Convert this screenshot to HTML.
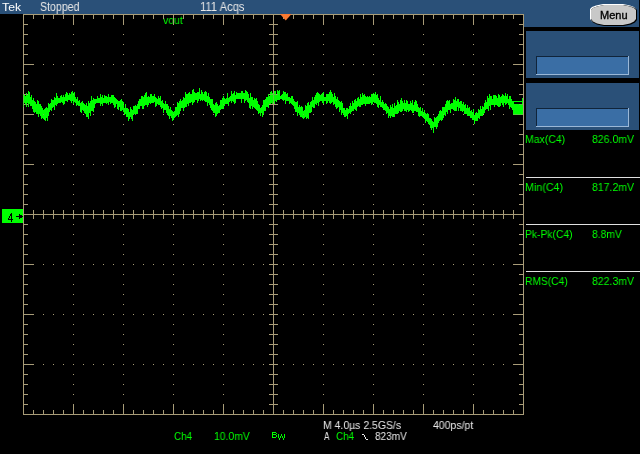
<!DOCTYPE html>
<html><head><meta charset="utf-8"><style>
html,body{margin:0;padding:0;background:#000;}
body{width:640px;height:454px;overflow:hidden;position:relative;font-family:"Liberation Sans",sans-serif;}
svg{position:absolute;left:0;top:0;}
.t{position:absolute;white-space:nowrap;transform-origin:0 0;will-change:transform;}
</style></head><body>
<svg width="640" height="454" viewBox="0 0 640 454" shape-rendering="crispEdges">
<rect x="0" y="0" width="640" height="454" fill="#000"/>
<rect x="0" y="0" width="639" height="14" fill="#2a5078"/>
<rect x="524" y="0" width="115" height="27" fill="#2a5078"/>
<rect x="526" y="31" width="113" height="47" fill="#2a5078"/>
<rect x="526" y="83" width="113" height="47" fill="#2a5078"/>
<rect x="536" y="56" width="93" height="19" fill="#3a6ea5"/>
<rect x="536" y="56" width="93" height="1" fill="#10243a"/>
<rect x="536" y="56" width="1" height="19" fill="#10243a"/>
<rect x="536" y="74" width="93" height="1" fill="#9ab8d8"/>
<rect x="628" y="56" width="1" height="19" fill="#9ab8d8"/>
<rect x="536" y="108" width="93" height="19" fill="#3a6ea5"/>
<rect x="536" y="108" width="93" height="1" fill="#10243a"/>
<rect x="536" y="108" width="1" height="19" fill="#10243a"/>
<rect x="536" y="126" width="93" height="1" fill="#9ab8d8"/>
<rect x="628" y="108" width="1" height="19" fill="#9ab8d8"/>
<rect x="526" y="177" width="114" height="1" fill="#e0e0e0"/>
<rect x="526" y="224" width="114" height="1" fill="#e0e0e0"/>
<rect x="526" y="271" width="114" height="1" fill="#e0e0e0"/>
<g id="tr" fill="#00ff00">
<rect x="24" y="95" width="1" height="8"/>
<rect x="25" y="96" width="1" height="9"/>
<rect x="26" y="93" width="1" height="14"/>
<rect x="27" y="95" width="1" height="8"/>
<rect x="28" y="91" width="1" height="16"/>
<rect x="29" y="92" width="1" height="12"/>
<rect x="30" y="97" width="1" height="9"/>
<rect x="31" y="95" width="1" height="11"/>
<rect x="32" y="100" width="1" height="9"/>
<rect x="33" y="98" width="1" height="14"/>
<rect x="34" y="101" width="1" height="12"/>
<rect x="35" y="102" width="1" height="10"/>
<rect x="36" y="104" width="1" height="10"/>
<rect x="37" y="100" width="1" height="14"/>
<rect x="38" y="101" width="1" height="16"/>
<rect x="39" y="104" width="1" height="10"/>
<rect x="40" y="104" width="1" height="12"/>
<rect x="41" y="106" width="1" height="13"/>
<rect x="42" y="108" width="1" height="10"/>
<rect x="43" y="110" width="1" height="9"/>
<rect x="44" y="109" width="1" height="11"/>
<rect x="45" y="108" width="1" height="13"/>
<rect x="46" y="107" width="1" height="11"/>
<rect x="47" y="108" width="1" height="13"/>
<rect x="48" y="103" width="1" height="13"/>
<rect x="49" y="104" width="1" height="8"/>
<rect x="50" y="103" width="1" height="7"/>
<rect x="51" y="99" width="1" height="12"/>
<rect x="52" y="100" width="1" height="8"/>
<rect x="53" y="100" width="1" height="7"/>
<rect x="54" y="97" width="1" height="13"/>
<rect x="55" y="98" width="1" height="7"/>
<rect x="56" y="93" width="1" height="13"/>
<rect x="57" y="96" width="1" height="8"/>
<rect x="58" y="98" width="1" height="5"/>
<rect x="59" y="98" width="1" height="5"/>
<rect x="60" y="96" width="1" height="7"/>
<rect x="61" y="95" width="1" height="7"/>
<rect x="62" y="97" width="1" height="6"/>
<rect x="63" y="95" width="1" height="10"/>
<rect x="64" y="97" width="1" height="7"/>
<rect x="65" y="94" width="1" height="7"/>
<rect x="66" y="92" width="1" height="9"/>
<rect x="67" y="93" width="1" height="9"/>
<rect x="68" y="95" width="1" height="5"/>
<rect x="69" y="93" width="1" height="7"/>
<rect x="70" y="94" width="1" height="7"/>
<rect x="71" y="92" width="1" height="11"/>
<rect x="72" y="91" width="1" height="10"/>
<rect x="73" y="93" width="1" height="11"/>
<rect x="74" y="92" width="1" height="10"/>
<rect x="75" y="97" width="1" height="6"/>
<rect x="76" y="99" width="1" height="7"/>
<rect x="77" y="97" width="1" height="8"/>
<rect x="78" y="101" width="1" height="5"/>
<rect x="79" y="100" width="1" height="6"/>
<rect x="80" y="103" width="1" height="9"/>
<rect x="81" y="102" width="1" height="11"/>
<rect x="82" y="101" width="1" height="9"/>
<rect x="83" y="103" width="1" height="8"/>
<rect x="84" y="104" width="1" height="9"/>
<rect x="85" y="105" width="1" height="9"/>
<rect x="86" y="103" width="1" height="14"/>
<rect x="87" y="106" width="1" height="11"/>
<rect x="88" y="101" width="1" height="18"/>
<rect x="89" y="103" width="1" height="10"/>
<rect x="90" y="101" width="1" height="15"/>
<rect x="91" y="96" width="1" height="15"/>
<rect x="92" y="100" width="1" height="11"/>
<rect x="93" y="98" width="1" height="14"/>
<rect x="94" y="99" width="1" height="9"/>
<rect x="95" y="99" width="1" height="5"/>
<rect x="96" y="99" width="1" height="4"/>
<rect x="97" y="96" width="1" height="7"/>
<rect x="98" y="98" width="1" height="5"/>
<rect x="99" y="98" width="1" height="5"/>
<rect x="100" y="94" width="1" height="12"/>
<rect x="101" y="97" width="1" height="7"/>
<rect x="102" y="95" width="1" height="11"/>
<rect x="103" y="98" width="1" height="5"/>
<rect x="104" y="95" width="1" height="8"/>
<rect x="105" y="96" width="1" height="7"/>
<rect x="106" y="96" width="1" height="8"/>
<rect x="107" y="97" width="1" height="6"/>
<rect x="108" y="94" width="1" height="11"/>
<rect x="109" y="97" width="1" height="5"/>
<rect x="110" y="97" width="1" height="7"/>
<rect x="111" y="95" width="1" height="8"/>
<rect x="112" y="95" width="1" height="8"/>
<rect x="113" y="95" width="1" height="10"/>
<rect x="114" y="97" width="1" height="11"/>
<rect x="115" y="98" width="1" height="9"/>
<rect x="116" y="99" width="1" height="5"/>
<rect x="117" y="100" width="1" height="9"/>
<rect x="118" y="101" width="1" height="9"/>
<rect x="119" y="101" width="1" height="6"/>
<rect x="120" y="100" width="1" height="11"/>
<rect x="121" y="99" width="1" height="12"/>
<rect x="122" y="101" width="1" height="9"/>
<rect x="123" y="102" width="1" height="10"/>
<rect x="124" y="108" width="1" height="7"/>
<rect x="125" y="104" width="1" height="10"/>
<rect x="126" y="108" width="1" height="9"/>
<rect x="127" y="108" width="1" height="9"/>
<rect x="128" y="109" width="1" height="12"/>
<rect x="129" y="112" width="1" height="7"/>
<rect x="130" y="107" width="1" height="10"/>
<rect x="131" y="109" width="1" height="10"/>
<rect x="132" y="110" width="1" height="11"/>
<rect x="133" y="106" width="1" height="9"/>
<rect x="134" y="106" width="1" height="8"/>
<rect x="135" y="105" width="1" height="10"/>
<rect x="136" y="106" width="1" height="8"/>
<rect x="137" y="104" width="1" height="10"/>
<rect x="138" y="101" width="1" height="8"/>
<rect x="139" y="99" width="1" height="10"/>
<rect x="140" y="99" width="1" height="7"/>
<rect x="141" y="96" width="1" height="10"/>
<rect x="142" y="96" width="1" height="13"/>
<rect x="143" y="97" width="1" height="12"/>
<rect x="144" y="95" width="1" height="11"/>
<rect x="145" y="93" width="1" height="12"/>
<rect x="146" y="92" width="1" height="13"/>
<rect x="147" y="97" width="1" height="10"/>
<rect x="148" y="96" width="1" height="9"/>
<rect x="149" y="97" width="1" height="6"/>
<rect x="150" y="94" width="1" height="10"/>
<rect x="151" y="94" width="1" height="9"/>
<rect x="152" y="96" width="1" height="7"/>
<rect x="153" y="96" width="1" height="7"/>
<rect x="154" y="94" width="1" height="8"/>
<rect x="155" y="97" width="1" height="10"/>
<rect x="156" y="98" width="1" height="8"/>
<rect x="157" y="99" width="1" height="5"/>
<rect x="158" y="96" width="1" height="9"/>
<rect x="159" y="98" width="1" height="7"/>
<rect x="160" y="96" width="1" height="11"/>
<rect x="161" y="101" width="1" height="8"/>
<rect x="162" y="100" width="1" height="8"/>
<rect x="163" y="103" width="1" height="10"/>
<rect x="164" y="104" width="1" height="6"/>
<rect x="165" y="101" width="1" height="9"/>
<rect x="166" y="104" width="1" height="9"/>
<rect x="167" y="104" width="1" height="11"/>
<rect x="168" y="106" width="1" height="10"/>
<rect x="169" y="109" width="1" height="10"/>
<rect x="170" y="107" width="1" height="9"/>
<rect x="171" y="110" width="1" height="8"/>
<rect x="172" y="111" width="1" height="10"/>
<rect x="173" y="112" width="1" height="8"/>
<rect x="174" y="111" width="1" height="7"/>
<rect x="175" y="107" width="1" height="10"/>
<rect x="176" y="107" width="1" height="9"/>
<rect x="177" y="102" width="1" height="13"/>
<rect x="178" y="103" width="1" height="14"/>
<rect x="179" y="101" width="1" height="13"/>
<rect x="180" y="99" width="1" height="12"/>
<rect x="181" y="101" width="1" height="7"/>
<rect x="182" y="100" width="1" height="8"/>
<rect x="183" y="97" width="1" height="14"/>
<rect x="184" y="98" width="1" height="10"/>
<rect x="185" y="92" width="1" height="15"/>
<rect x="186" y="94" width="1" height="13"/>
<rect x="187" y="94" width="1" height="10"/>
<rect x="188" y="93" width="1" height="13"/>
<rect x="189" y="92" width="1" height="11"/>
<rect x="190" y="94" width="1" height="9"/>
<rect x="191" y="94" width="1" height="8"/>
<rect x="192" y="90" width="1" height="15"/>
<rect x="193" y="89" width="1" height="14"/>
<rect x="194" y="92" width="1" height="10"/>
<rect x="195" y="93" width="1" height="7"/>
<rect x="196" y="93" width="1" height="7"/>
<rect x="197" y="92" width="1" height="11"/>
<rect x="198" y="92" width="1" height="9"/>
<rect x="199" y="88" width="1" height="11"/>
<rect x="200" y="94" width="1" height="7"/>
<rect x="201" y="90" width="1" height="10"/>
<rect x="202" y="92" width="1" height="9"/>
<rect x="203" y="94" width="1" height="6"/>
<rect x="204" y="92" width="1" height="9"/>
<rect x="205" y="91" width="1" height="11"/>
<rect x="206" y="92" width="1" height="10"/>
<rect x="207" y="96" width="1" height="10"/>
<rect x="208" y="93" width="1" height="10"/>
<rect x="209" y="97" width="1" height="8"/>
<rect x="210" y="99" width="1" height="9"/>
<rect x="211" y="99" width="1" height="11"/>
<rect x="212" y="99" width="1" height="12"/>
<rect x="213" y="104" width="1" height="9"/>
<rect x="214" y="105" width="1" height="8"/>
<rect x="215" y="103" width="1" height="14"/>
<rect x="216" y="102" width="1" height="14"/>
<rect x="217" y="104" width="1" height="10"/>
<rect x="218" y="106" width="1" height="7"/>
<rect x="219" y="105" width="1" height="8"/>
<rect x="220" y="100" width="1" height="10"/>
<rect x="221" y="100" width="1" height="9"/>
<rect x="222" y="98" width="1" height="11"/>
<rect x="223" y="96" width="1" height="13"/>
<rect x="224" y="98" width="1" height="8"/>
<rect x="225" y="99" width="1" height="5"/>
<rect x="226" y="98" width="1" height="6"/>
<rect x="227" y="93" width="1" height="11"/>
<rect x="228" y="98" width="1" height="8"/>
<rect x="229" y="97" width="1" height="5"/>
<rect x="230" y="96" width="1" height="5"/>
<rect x="231" y="91" width="1" height="12"/>
<rect x="232" y="94" width="1" height="7"/>
<rect x="233" y="93" width="1" height="9"/>
<rect x="234" y="91" width="1" height="13"/>
<rect x="235" y="95" width="1" height="8"/>
<rect x="236" y="92" width="1" height="7"/>
<rect x="237" y="93" width="1" height="6"/>
<rect x="238" y="93" width="1" height="6"/>
<rect x="239" y="93" width="1" height="6"/>
<rect x="240" y="93" width="1" height="6"/>
<rect x="241" y="91" width="1" height="12"/>
<rect x="242" y="91" width="1" height="8"/>
<rect x="243" y="93" width="1" height="6"/>
<rect x="244" y="93" width="1" height="10"/>
<rect x="245" y="90" width="1" height="11"/>
<rect x="246" y="91" width="1" height="9"/>
<rect x="247" y="92" width="1" height="10"/>
<rect x="248" y="94" width="1" height="9"/>
<rect x="249" y="98" width="1" height="10"/>
<rect x="250" y="93" width="1" height="16"/>
<rect x="251" y="97" width="1" height="9"/>
<rect x="252" y="97" width="1" height="12"/>
<rect x="253" y="100" width="1" height="7"/>
<rect x="254" y="98" width="1" height="10"/>
<rect x="255" y="99" width="1" height="10"/>
<rect x="256" y="98" width="1" height="12"/>
<rect x="257" y="101" width="1" height="10"/>
<rect x="258" y="104" width="1" height="10"/>
<rect x="259" y="105" width="1" height="8"/>
<rect x="260" y="108" width="1" height="8"/>
<rect x="261" y="107" width="1" height="6"/>
<rect x="262" y="105" width="1" height="12"/>
<rect x="263" y="100" width="1" height="15"/>
<rect x="264" y="100" width="1" height="11"/>
<rect x="265" y="99" width="1" height="12"/>
<rect x="266" y="97" width="1" height="10"/>
<rect x="267" y="97" width="1" height="10"/>
<rect x="268" y="94" width="1" height="14"/>
<rect x="269" y="96" width="1" height="8"/>
<rect x="270" y="92" width="1" height="12"/>
<rect x="271" y="91" width="1" height="12"/>
<rect x="272" y="93" width="1" height="11"/>
<rect x="273" y="94" width="1" height="8"/>
<rect x="274" y="91" width="1" height="13"/>
<rect x="275" y="91" width="1" height="10"/>
<rect x="276" y="95" width="1" height="7"/>
<rect x="277" y="90" width="1" height="10"/>
<rect x="278" y="91" width="1" height="9"/>
<rect x="279" y="90" width="1" height="10"/>
<rect x="280" y="96" width="1" height="3"/>
<rect x="281" y="95" width="1" height="4"/>
<rect x="282" y="94" width="1" height="6"/>
<rect x="283" y="91" width="1" height="10"/>
<rect x="284" y="92" width="1" height="8"/>
<rect x="285" y="92" width="1" height="12"/>
<rect x="286" y="94" width="1" height="7"/>
<rect x="287" y="93" width="1" height="8"/>
<rect x="288" y="97" width="1" height="4"/>
<rect x="289" y="97" width="1" height="7"/>
<rect x="290" y="98" width="1" height="5"/>
<rect x="291" y="96" width="1" height="8"/>
<rect x="292" y="96" width="1" height="9"/>
<rect x="293" y="99" width="1" height="7"/>
<rect x="294" y="101" width="1" height="8"/>
<rect x="295" y="102" width="1" height="10"/>
<rect x="296" y="102" width="1" height="10"/>
<rect x="297" y="101" width="1" height="15"/>
<rect x="298" y="107" width="1" height="6"/>
<rect x="299" y="105" width="1" height="10"/>
<rect x="300" y="107" width="1" height="10"/>
<rect x="301" y="106" width="1" height="11"/>
<rect x="302" y="107" width="1" height="11"/>
<rect x="303" y="111" width="1" height="8"/>
<rect x="304" y="110" width="1" height="8"/>
<rect x="305" y="105" width="1" height="12"/>
<rect x="306" y="106" width="1" height="13"/>
<rect x="307" y="103" width="1" height="15"/>
<rect x="308" y="102" width="1" height="17"/>
<rect x="309" y="105" width="1" height="8"/>
<rect x="310" y="102" width="1" height="11"/>
<rect x="311" y="101" width="1" height="11"/>
<rect x="312" y="97" width="1" height="10"/>
<rect x="313" y="100" width="1" height="8"/>
<rect x="314" y="97" width="1" height="11"/>
<rect x="315" y="95" width="1" height="9"/>
<rect x="316" y="93" width="1" height="12"/>
<rect x="317" y="92" width="1" height="11"/>
<rect x="318" y="93" width="1" height="13"/>
<rect x="319" y="94" width="1" height="8"/>
<rect x="320" y="95" width="1" height="6"/>
<rect x="321" y="94" width="1" height="7"/>
<rect x="322" y="93" width="1" height="10"/>
<rect x="323" y="92" width="1" height="12"/>
<rect x="324" y="97" width="1" height="4"/>
<rect x="325" y="97" width="1" height="4"/>
<rect x="326" y="94" width="1" height="10"/>
<rect x="327" y="94" width="1" height="9"/>
<rect x="328" y="94" width="1" height="7"/>
<rect x="329" y="92" width="1" height="11"/>
<rect x="330" y="90" width="1" height="14"/>
<rect x="331" y="92" width="1" height="11"/>
<rect x="332" y="94" width="1" height="8"/>
<rect x="333" y="97" width="1" height="8"/>
<rect x="334" y="93" width="1" height="11"/>
<rect x="335" y="96" width="1" height="11"/>
<rect x="336" y="99" width="1" height="10"/>
<rect x="337" y="97" width="1" height="11"/>
<rect x="338" y="100" width="1" height="7"/>
<rect x="339" y="101" width="1" height="11"/>
<rect x="340" y="102" width="1" height="8"/>
<rect x="341" y="101" width="1" height="14"/>
<rect x="342" y="103" width="1" height="10"/>
<rect x="343" y="108" width="1" height="7"/>
<rect x="344" y="108" width="1" height="9"/>
<rect x="345" y="110" width="1" height="7"/>
<rect x="346" y="108" width="1" height="8"/>
<rect x="347" y="108" width="1" height="11"/>
<rect x="348" y="109" width="1" height="5"/>
<rect x="349" y="106" width="1" height="7"/>
<rect x="350" y="103" width="1" height="11"/>
<rect x="351" y="106" width="1" height="6"/>
<rect x="352" y="101" width="1" height="10"/>
<rect x="353" y="103" width="1" height="8"/>
<rect x="354" y="100" width="1" height="9"/>
<rect x="355" y="99" width="1" height="11"/>
<rect x="356" y="101" width="1" height="10"/>
<rect x="357" y="98" width="1" height="9"/>
<rect x="358" y="97" width="1" height="9"/>
<rect x="359" y="99" width="1" height="8"/>
<rect x="360" y="94" width="1" height="13"/>
<rect x="361" y="97" width="1" height="8"/>
<rect x="362" y="93" width="1" height="12"/>
<rect x="363" y="95" width="1" height="9"/>
<rect x="364" y="94" width="1" height="10"/>
<rect x="365" y="96" width="1" height="10"/>
<rect x="366" y="97" width="1" height="7"/>
<rect x="367" y="96" width="1" height="8"/>
<rect x="368" y="97" width="1" height="7"/>
<rect x="369" y="96" width="1" height="8"/>
<rect x="370" y="97" width="1" height="6"/>
<rect x="371" y="94" width="1" height="11"/>
<rect x="372" y="94" width="1" height="10"/>
<rect x="373" y="93" width="1" height="9"/>
<rect x="374" y="94" width="1" height="9"/>
<rect x="375" y="92" width="1" height="11"/>
<rect x="376" y="95" width="1" height="9"/>
<rect x="377" y="94" width="1" height="13"/>
<rect x="378" y="98" width="1" height="10"/>
<rect x="379" y="100" width="1" height="5"/>
<rect x="380" y="96" width="1" height="11"/>
<rect x="381" y="102" width="1" height="5"/>
<rect x="382" y="100" width="1" height="8"/>
<rect x="383" y="102" width="1" height="8"/>
<rect x="384" y="104" width="1" height="6"/>
<rect x="385" y="103" width="1" height="8"/>
<rect x="386" y="104" width="1" height="10"/>
<rect x="387" y="106" width="1" height="7"/>
<rect x="388" y="107" width="1" height="11"/>
<rect x="389" y="109" width="1" height="7"/>
<rect x="390" y="105" width="1" height="13"/>
<rect x="391" y="107" width="1" height="9"/>
<rect x="392" y="104" width="1" height="13"/>
<rect x="393" y="108" width="1" height="9"/>
<rect x="394" y="103" width="1" height="14"/>
<rect x="395" y="106" width="1" height="8"/>
<rect x="396" y="105" width="1" height="9"/>
<rect x="397" y="100" width="1" height="14"/>
<rect x="398" y="102" width="1" height="11"/>
<rect x="399" y="104" width="1" height="7"/>
<rect x="400" y="100" width="1" height="12"/>
<rect x="401" y="98" width="1" height="14"/>
<rect x="402" y="101" width="1" height="10"/>
<rect x="403" y="103" width="1" height="6"/>
<rect x="404" y="100" width="1" height="11"/>
<rect x="405" y="103" width="1" height="8"/>
<rect x="406" y="100" width="1" height="12"/>
<rect x="407" y="101" width="1" height="9"/>
<rect x="408" y="104" width="1" height="8"/>
<rect x="409" y="104" width="1" height="7"/>
<rect x="410" y="101" width="1" height="9"/>
<rect x="411" y="103" width="1" height="8"/>
<rect x="412" y="100" width="1" height="13"/>
<rect x="413" y="105" width="1" height="8"/>
<rect x="414" y="102" width="1" height="9"/>
<rect x="415" y="100" width="1" height="11"/>
<rect x="416" y="101" width="1" height="11"/>
<rect x="417" y="104" width="1" height="8"/>
<rect x="418" y="107" width="1" height="9"/>
<rect x="419" y="108" width="1" height="9"/>
<rect x="420" y="107" width="1" height="9"/>
<rect x="421" y="111" width="1" height="5"/>
<rect x="422" y="108" width="1" height="9"/>
<rect x="423" y="112" width="1" height="6"/>
<rect x="424" y="110" width="1" height="9"/>
<rect x="425" y="113" width="1" height="10"/>
<rect x="426" y="114" width="1" height="7"/>
<rect x="427" y="113" width="1" height="9"/>
<rect x="428" y="114" width="1" height="10"/>
<rect x="429" y="118" width="1" height="7"/>
<rect x="430" y="118" width="1" height="10"/>
<rect x="431" y="119" width="1" height="11"/>
<rect x="432" y="121" width="1" height="7"/>
<rect x="433" y="122" width="1" height="11"/>
<rect x="434" y="117" width="1" height="10"/>
<rect x="435" y="118" width="1" height="9"/>
<rect x="436" y="117" width="1" height="12"/>
<rect x="437" y="116" width="1" height="11"/>
<rect x="438" y="114" width="1" height="9"/>
<rect x="439" y="111" width="1" height="10"/>
<rect x="440" y="110" width="1" height="10"/>
<rect x="441" y="111" width="1" height="10"/>
<rect x="442" y="107" width="1" height="13"/>
<rect x="443" y="107" width="1" height="11"/>
<rect x="444" y="107" width="1" height="8"/>
<rect x="445" y="104" width="1" height="12"/>
<rect x="446" y="101" width="1" height="11"/>
<rect x="447" y="100" width="1" height="14"/>
<rect x="448" y="101" width="1" height="9"/>
<rect x="449" y="100" width="1" height="10"/>
<rect x="450" y="104" width="1" height="9"/>
<rect x="451" y="103" width="1" height="6"/>
<rect x="452" y="103" width="1" height="6"/>
<rect x="453" y="99" width="1" height="11"/>
<rect x="454" y="100" width="1" height="11"/>
<rect x="455" y="97" width="1" height="14"/>
<rect x="456" y="101" width="1" height="10"/>
<rect x="457" y="99" width="1" height="8"/>
<rect x="458" y="99" width="1" height="12"/>
<rect x="459" y="102" width="1" height="6"/>
<rect x="460" y="101" width="1" height="10"/>
<rect x="461" y="101" width="1" height="10"/>
<rect x="462" y="104" width="1" height="8"/>
<rect x="463" y="102" width="1" height="9"/>
<rect x="464" y="105" width="1" height="9"/>
<rect x="465" y="104" width="1" height="10"/>
<rect x="466" y="108" width="1" height="6"/>
<rect x="467" y="105" width="1" height="11"/>
<rect x="468" y="108" width="1" height="8"/>
<rect x="469" y="107" width="1" height="9"/>
<rect x="470" y="111" width="1" height="7"/>
<rect x="471" y="110" width="1" height="8"/>
<rect x="472" y="112" width="1" height="8"/>
<rect x="473" y="109" width="1" height="11"/>
<rect x="474" y="115" width="1" height="9"/>
<rect x="475" y="113" width="1" height="8"/>
<rect x="476" y="112" width="1" height="9"/>
<rect x="477" y="113" width="1" height="8"/>
<rect x="478" y="109" width="1" height="9"/>
<rect x="479" y="110" width="1" height="9"/>
<rect x="480" y="106" width="1" height="10"/>
<rect x="481" y="109" width="1" height="7"/>
<rect x="482" y="106" width="1" height="10"/>
<rect x="483" y="107" width="1" height="7"/>
<rect x="484" y="103" width="1" height="10"/>
<rect x="485" y="100" width="1" height="10"/>
<rect x="486" y="102" width="1" height="7"/>
<rect x="487" y="96" width="1" height="13"/>
<rect x="488" y="98" width="1" height="13"/>
<rect x="489" y="94" width="1" height="12"/>
<rect x="490" y="96" width="1" height="14"/>
<rect x="491" y="96" width="1" height="9"/>
<rect x="492" y="99" width="1" height="6"/>
<rect x="493" y="95" width="1" height="10"/>
<rect x="494" y="95" width="1" height="12"/>
<rect x="495" y="95" width="1" height="10"/>
<rect x="496" y="96" width="1" height="9"/>
<rect x="497" y="98" width="1" height="8"/>
<rect x="498" y="94" width="1" height="13"/>
<rect x="499" y="95" width="1" height="12"/>
<rect x="500" y="97" width="1" height="9"/>
<rect x="501" y="96" width="1" height="7"/>
<rect x="502" y="94" width="1" height="11"/>
<rect x="503" y="95" width="1" height="12"/>
<rect x="504" y="96" width="1" height="7"/>
<rect x="505" y="93" width="1" height="12"/>
<rect x="506" y="96" width="1" height="8"/>
<rect x="507" y="94" width="1" height="9"/>
<rect x="508" y="99" width="1" height="6"/>
<rect x="509" y="96" width="1" height="13"/>
<rect x="510" y="96" width="1" height="11"/>
<rect x="511" y="99" width="1" height="9"/>
<rect x="512" y="101" width="1" height="9"/>
<rect x="513" y="101" width="1" height="14"/>
<rect x="514" y="101" width="1" height="14"/>
<rect x="515" y="101" width="1" height="14"/>
<rect x="516" y="101" width="1" height="14"/>
<rect x="517" y="101" width="1" height="14"/>
<rect x="518" y="101" width="1" height="14"/>
<rect x="519" y="101" width="1" height="14"/>
<rect x="520" y="101" width="1" height="14"/>
<rect x="521" y="101" width="1" height="14"/>
<rect x="522" y="98" width="1" height="17"/>
<rect x="23" y="94" width="1" height="13"/>
</g>
<g fill="#e8e8e8"><rect x="362" y="434" width="2" height="1"/><rect x="364" y="435" width="1" height="2"/><rect x="365" y="437" width="1" height="2"/><rect x="366" y="439" width="2" height="1"/></g>
<g fill="#00ff00"><rect x="272" y="432" width="4" height="1"/><rect x="272" y="433" width="1" height="5"/><rect x="276" y="433" width="1" height="1"/><rect x="272" y="434" width="4" height="1"/><rect x="276" y="435" width="1" height="2"/><rect x="272" y="437" width="4" height="1"/><rect x="278" y="434" width="1" height="4"/><rect x="279" y="438" width="1" height="2"/><rect x="280" y="436" width="1" height="2"/><rect x="281" y="434" width="1" height="2"/><rect x="282" y="436" width="1" height="2"/><rect x="283" y="438" width="1" height="2"/><rect x="284" y="434" width="1" height="4"/></g>
<g shape-rendering="auto">
<polygon points="590,9 592,7 596,5.5 603,4 623,4 630,5.5 634,7 636,9 636,19 634,21.5 630,23.5 623,25 603,25 596,23.5 592,21.5 590,19" fill="#ffffff"/>
<polygon points="591,10 593,8 597,6.5 604,5 624,5 631,6.5 635,8 637,10 637,20 635,22.5 631,24.5 624,26 604,26 597,24.5 593,22.5 591,20" fill="#000000"/>
<polygon points="591,10 593,8 597,6.5 604,5 623,5 630,6.5 634,8 636,10 636,19 634,21.5 630,23.5 623,25 604,25 597,23.5 593,21.5 591,19" fill="#c8c8c8"/>
</g>
</svg>
<div class="t" style="left:2.00px;top:2px;font-size:11px;line-height:11px;color:#ffffff;transform:scaleX(1.1176);">Tek</div>
<div class="t" style="left:40.12px;top:1px;font-size:12px;line-height:12px;color:#e8e8e8;transform:scaleX(0.8837);">Stopped</div>
<div class="t" style="left:200.07px;top:1px;font-size:12px;line-height:12px;color:#e8e8e8;transform:scaleX(0.9348);">111 Acqs</div>
<div class="t" style="left:163.00px;top:15px;font-size:11px;line-height:11px;color:#00ff00;transform:scaleX(0.9524);">vout</div>
<div class="t" style="left:600.00px;top:10px;font-size:11px;line-height:11px;color:#000;transform:scaleX(1.0000);-webkit-text-stroke:0.35px #000;">Menu</div>
<div class="t" style="left:525.05px;top:134px;font-size:11px;line-height:11px;color:#00ff00;transform:scaleX(0.9512);">Max(C4)</div>
<div class="t" style="left:592.00px;top:134px;font-size:11px;line-height:11px;color:#00ff00;transform:scaleX(0.9545);">826.0mV</div>
<div class="t" style="left:525.03px;top:182px;font-size:11px;line-height:11px;color:#00ff00;transform:scaleX(0.9737);">Min(C4)</div>
<div class="t" style="left:592.00px;top:182px;font-size:11px;line-height:11px;color:#00ff00;transform:scaleX(0.9545);">817.2mV</div>
<div class="t" style="left:525.06px;top:229px;font-size:11px;line-height:11px;color:#00ff00;transform:scaleX(0.9388);">Pk-Pk(C4)</div>
<div class="t" style="left:592.00px;top:229px;font-size:11px;line-height:11px;color:#00ff00;transform:scaleX(0.9375);">8.8mV</div>
<div class="t" style="left:525.07px;top:276px;font-size:11px;line-height:11px;color:#00ff00;transform:scaleX(0.9333);">RMS(C4)</div>
<div class="t" style="left:592.00px;top:276px;font-size:11px;line-height:11px;color:#00ff00;transform:scaleX(0.9545);">822.3mV</div>
<div class="t" style="left:174.00px;top:431px;font-size:11px;line-height:11px;color:#00ff00;transform:scaleX(0.9000);">Ch4</div>
<div class="t" style="left:214.05px;top:431px;font-size:11px;line-height:11px;color:#00ff00;transform:scaleX(0.9459);">10.0mV</div>
<div class="t" style="left:323.05px;top:420px;font-size:11px;line-height:11px;color:#e8e8e8;transform:scaleX(0.9506);">M 4.0µs 2.5GS/s</div>
<div class="t" style="left:433.00px;top:420px;font-size:11px;line-height:11px;color:#e8e8e8;transform:scaleX(0.9535);">400ps/pt</div>
<div class="t" style="left:324.00px;top:431px;font-size:11px;line-height:11px;color:#e8e8e8;transform:scaleX(0.7500);">A</div>
<div class="t" style="left:336.00px;top:431px;font-size:11px;line-height:11px;color:#00ff00;transform:scaleX(0.9000);">Ch4</div>
<div class="t" style="left:375.00px;top:431px;font-size:11px;line-height:11px;color:#e8e8e8;transform:scaleX(0.9143);">823mV</div>
<svg width="640" height="454" viewBox="0 0 640 454" shape-rendering="crispEdges">
<g fill="#a89c78">
<rect x="23" y="14" width="501" height="1"/>
<rect x="23" y="414" width="501" height="1"/>
<rect x="23" y="14" width="1" height="401"/>
<rect x="523" y="14" width="1" height="401"/>
<rect x="273" y="14" width="1" height="401"/>
<rect x="23" y="214" width="501" height="1"/>
<rect x="33" y="14" width="1" height="5"/>
<rect x="33" y="410" width="1" height="5"/>
<rect x="33" y="210" width="1" height="9"/>
<rect x="43" y="14" width="1" height="5"/>
<rect x="43" y="410" width="1" height="5"/>
<rect x="43" y="210" width="1" height="9"/>
<rect x="53" y="14" width="1" height="5"/>
<rect x="53" y="410" width="1" height="5"/>
<rect x="53" y="210" width="1" height="9"/>
<rect x="63" y="14" width="1" height="5"/>
<rect x="63" y="410" width="1" height="5"/>
<rect x="63" y="210" width="1" height="9"/>
<rect x="73" y="14" width="1" height="10"/>
<rect x="73" y="405" width="1" height="10"/>
<rect x="73" y="210" width="1" height="9"/>
<rect x="83" y="14" width="1" height="5"/>
<rect x="83" y="410" width="1" height="5"/>
<rect x="83" y="210" width="1" height="9"/>
<rect x="93" y="14" width="1" height="5"/>
<rect x="93" y="410" width="1" height="5"/>
<rect x="93" y="210" width="1" height="9"/>
<rect x="103" y="14" width="1" height="5"/>
<rect x="103" y="410" width="1" height="5"/>
<rect x="103" y="210" width="1" height="9"/>
<rect x="113" y="14" width="1" height="5"/>
<rect x="113" y="410" width="1" height="5"/>
<rect x="113" y="210" width="1" height="9"/>
<rect x="123" y="14" width="1" height="10"/>
<rect x="123" y="405" width="1" height="10"/>
<rect x="123" y="210" width="1" height="9"/>
<rect x="133" y="14" width="1" height="5"/>
<rect x="133" y="410" width="1" height="5"/>
<rect x="133" y="210" width="1" height="9"/>
<rect x="143" y="14" width="1" height="5"/>
<rect x="143" y="410" width="1" height="5"/>
<rect x="143" y="210" width="1" height="9"/>
<rect x="153" y="14" width="1" height="5"/>
<rect x="153" y="410" width="1" height="5"/>
<rect x="153" y="210" width="1" height="9"/>
<rect x="163" y="14" width="1" height="5"/>
<rect x="163" y="410" width="1" height="5"/>
<rect x="163" y="210" width="1" height="9"/>
<rect x="173" y="14" width="1" height="10"/>
<rect x="173" y="405" width="1" height="10"/>
<rect x="173" y="210" width="1" height="9"/>
<rect x="183" y="14" width="1" height="5"/>
<rect x="183" y="410" width="1" height="5"/>
<rect x="183" y="210" width="1" height="9"/>
<rect x="193" y="14" width="1" height="5"/>
<rect x="193" y="410" width="1" height="5"/>
<rect x="193" y="210" width="1" height="9"/>
<rect x="203" y="14" width="1" height="5"/>
<rect x="203" y="410" width="1" height="5"/>
<rect x="203" y="210" width="1" height="9"/>
<rect x="213" y="14" width="1" height="5"/>
<rect x="213" y="410" width="1" height="5"/>
<rect x="213" y="210" width="1" height="9"/>
<rect x="223" y="14" width="1" height="10"/>
<rect x="223" y="405" width="1" height="10"/>
<rect x="223" y="210" width="1" height="9"/>
<rect x="233" y="14" width="1" height="5"/>
<rect x="233" y="410" width="1" height="5"/>
<rect x="233" y="210" width="1" height="9"/>
<rect x="243" y="14" width="1" height="5"/>
<rect x="243" y="410" width="1" height="5"/>
<rect x="243" y="210" width="1" height="9"/>
<rect x="253" y="14" width="1" height="5"/>
<rect x="253" y="410" width="1" height="5"/>
<rect x="253" y="210" width="1" height="9"/>
<rect x="263" y="14" width="1" height="5"/>
<rect x="263" y="410" width="1" height="5"/>
<rect x="263" y="210" width="1" height="9"/>
<rect x="273" y="14" width="1" height="10"/>
<rect x="273" y="405" width="1" height="10"/>
<rect x="273" y="210" width="1" height="9"/>
<rect x="283" y="14" width="1" height="5"/>
<rect x="283" y="410" width="1" height="5"/>
<rect x="283" y="210" width="1" height="9"/>
<rect x="293" y="14" width="1" height="5"/>
<rect x="293" y="410" width="1" height="5"/>
<rect x="293" y="210" width="1" height="9"/>
<rect x="303" y="14" width="1" height="5"/>
<rect x="303" y="410" width="1" height="5"/>
<rect x="303" y="210" width="1" height="9"/>
<rect x="313" y="14" width="1" height="5"/>
<rect x="313" y="410" width="1" height="5"/>
<rect x="313" y="210" width="1" height="9"/>
<rect x="323" y="14" width="1" height="10"/>
<rect x="323" y="405" width="1" height="10"/>
<rect x="323" y="210" width="1" height="9"/>
<rect x="333" y="14" width="1" height="5"/>
<rect x="333" y="410" width="1" height="5"/>
<rect x="333" y="210" width="1" height="9"/>
<rect x="343" y="14" width="1" height="5"/>
<rect x="343" y="410" width="1" height="5"/>
<rect x="343" y="210" width="1" height="9"/>
<rect x="353" y="14" width="1" height="5"/>
<rect x="353" y="410" width="1" height="5"/>
<rect x="353" y="210" width="1" height="9"/>
<rect x="363" y="14" width="1" height="5"/>
<rect x="363" y="410" width="1" height="5"/>
<rect x="363" y="210" width="1" height="9"/>
<rect x="373" y="14" width="1" height="10"/>
<rect x="373" y="405" width="1" height="10"/>
<rect x="373" y="210" width="1" height="9"/>
<rect x="383" y="14" width="1" height="5"/>
<rect x="383" y="410" width="1" height="5"/>
<rect x="383" y="210" width="1" height="9"/>
<rect x="393" y="14" width="1" height="5"/>
<rect x="393" y="410" width="1" height="5"/>
<rect x="393" y="210" width="1" height="9"/>
<rect x="403" y="14" width="1" height="5"/>
<rect x="403" y="410" width="1" height="5"/>
<rect x="403" y="210" width="1" height="9"/>
<rect x="413" y="14" width="1" height="5"/>
<rect x="413" y="410" width="1" height="5"/>
<rect x="413" y="210" width="1" height="9"/>
<rect x="423" y="14" width="1" height="10"/>
<rect x="423" y="405" width="1" height="10"/>
<rect x="423" y="210" width="1" height="9"/>
<rect x="433" y="14" width="1" height="5"/>
<rect x="433" y="410" width="1" height="5"/>
<rect x="433" y="210" width="1" height="9"/>
<rect x="443" y="14" width="1" height="5"/>
<rect x="443" y="410" width="1" height="5"/>
<rect x="443" y="210" width="1" height="9"/>
<rect x="453" y="14" width="1" height="5"/>
<rect x="453" y="410" width="1" height="5"/>
<rect x="453" y="210" width="1" height="9"/>
<rect x="463" y="14" width="1" height="5"/>
<rect x="463" y="410" width="1" height="5"/>
<rect x="463" y="210" width="1" height="9"/>
<rect x="473" y="14" width="1" height="10"/>
<rect x="473" y="405" width="1" height="10"/>
<rect x="473" y="210" width="1" height="9"/>
<rect x="483" y="14" width="1" height="5"/>
<rect x="483" y="410" width="1" height="5"/>
<rect x="483" y="210" width="1" height="9"/>
<rect x="493" y="14" width="1" height="5"/>
<rect x="493" y="410" width="1" height="5"/>
<rect x="493" y="210" width="1" height="9"/>
<rect x="503" y="14" width="1" height="5"/>
<rect x="503" y="410" width="1" height="5"/>
<rect x="503" y="210" width="1" height="9"/>
<rect x="513" y="14" width="1" height="5"/>
<rect x="513" y="410" width="1" height="5"/>
<rect x="513" y="210" width="1" height="9"/>
<rect x="23" y="24" width="5" height="1"/>
<rect x="519" y="24" width="5" height="1"/>
<rect x="269" y="24" width="9" height="1"/>
<rect x="23" y="34" width="5" height="1"/>
<rect x="519" y="34" width="5" height="1"/>
<rect x="269" y="34" width="9" height="1"/>
<rect x="23" y="44" width="5" height="1"/>
<rect x="519" y="44" width="5" height="1"/>
<rect x="269" y="44" width="9" height="1"/>
<rect x="23" y="54" width="5" height="1"/>
<rect x="519" y="54" width="5" height="1"/>
<rect x="269" y="54" width="9" height="1"/>
<rect x="23" y="64" width="10" height="1"/>
<rect x="514" y="64" width="10" height="1"/>
<rect x="269" y="64" width="9" height="1"/>
<rect x="23" y="74" width="5" height="1"/>
<rect x="519" y="74" width="5" height="1"/>
<rect x="269" y="74" width="9" height="1"/>
<rect x="23" y="84" width="5" height="1"/>
<rect x="519" y="84" width="5" height="1"/>
<rect x="269" y="84" width="9" height="1"/>
<rect x="23" y="94" width="5" height="1"/>
<rect x="519" y="94" width="5" height="1"/>
<rect x="269" y="94" width="9" height="1"/>
<rect x="23" y="104" width="5" height="1"/>
<rect x="519" y="104" width="5" height="1"/>
<rect x="269" y="104" width="9" height="1"/>
<rect x="23" y="114" width="10" height="1"/>
<rect x="514" y="114" width="10" height="1"/>
<rect x="269" y="114" width="9" height="1"/>
<rect x="23" y="124" width="5" height="1"/>
<rect x="519" y="124" width="5" height="1"/>
<rect x="269" y="124" width="9" height="1"/>
<rect x="23" y="134" width="5" height="1"/>
<rect x="519" y="134" width="5" height="1"/>
<rect x="269" y="134" width="9" height="1"/>
<rect x="23" y="144" width="5" height="1"/>
<rect x="519" y="144" width="5" height="1"/>
<rect x="269" y="144" width="9" height="1"/>
<rect x="23" y="154" width="5" height="1"/>
<rect x="519" y="154" width="5" height="1"/>
<rect x="269" y="154" width="9" height="1"/>
<rect x="23" y="164" width="10" height="1"/>
<rect x="514" y="164" width="10" height="1"/>
<rect x="269" y="164" width="9" height="1"/>
<rect x="23" y="174" width="5" height="1"/>
<rect x="519" y="174" width="5" height="1"/>
<rect x="269" y="174" width="9" height="1"/>
<rect x="23" y="184" width="5" height="1"/>
<rect x="519" y="184" width="5" height="1"/>
<rect x="269" y="184" width="9" height="1"/>
<rect x="23" y="194" width="5" height="1"/>
<rect x="519" y="194" width="5" height="1"/>
<rect x="269" y="194" width="9" height="1"/>
<rect x="23" y="204" width="5" height="1"/>
<rect x="519" y="204" width="5" height="1"/>
<rect x="269" y="204" width="9" height="1"/>
<rect x="23" y="214" width="10" height="1"/>
<rect x="514" y="214" width="10" height="1"/>
<rect x="269" y="214" width="9" height="1"/>
<rect x="23" y="224" width="5" height="1"/>
<rect x="519" y="224" width="5" height="1"/>
<rect x="269" y="224" width="9" height="1"/>
<rect x="23" y="234" width="5" height="1"/>
<rect x="519" y="234" width="5" height="1"/>
<rect x="269" y="234" width="9" height="1"/>
<rect x="23" y="244" width="5" height="1"/>
<rect x="519" y="244" width="5" height="1"/>
<rect x="269" y="244" width="9" height="1"/>
<rect x="23" y="254" width="5" height="1"/>
<rect x="519" y="254" width="5" height="1"/>
<rect x="269" y="254" width="9" height="1"/>
<rect x="23" y="264" width="10" height="1"/>
<rect x="514" y="264" width="10" height="1"/>
<rect x="269" y="264" width="9" height="1"/>
<rect x="23" y="274" width="5" height="1"/>
<rect x="519" y="274" width="5" height="1"/>
<rect x="269" y="274" width="9" height="1"/>
<rect x="23" y="284" width="5" height="1"/>
<rect x="519" y="284" width="5" height="1"/>
<rect x="269" y="284" width="9" height="1"/>
<rect x="23" y="294" width="5" height="1"/>
<rect x="519" y="294" width="5" height="1"/>
<rect x="269" y="294" width="9" height="1"/>
<rect x="23" y="304" width="5" height="1"/>
<rect x="519" y="304" width="5" height="1"/>
<rect x="269" y="304" width="9" height="1"/>
<rect x="23" y="314" width="10" height="1"/>
<rect x="514" y="314" width="10" height="1"/>
<rect x="269" y="314" width="9" height="1"/>
<rect x="23" y="324" width="5" height="1"/>
<rect x="519" y="324" width="5" height="1"/>
<rect x="269" y="324" width="9" height="1"/>
<rect x="23" y="334" width="5" height="1"/>
<rect x="519" y="334" width="5" height="1"/>
<rect x="269" y="334" width="9" height="1"/>
<rect x="23" y="344" width="5" height="1"/>
<rect x="519" y="344" width="5" height="1"/>
<rect x="269" y="344" width="9" height="1"/>
<rect x="23" y="354" width="5" height="1"/>
<rect x="519" y="354" width="5" height="1"/>
<rect x="269" y="354" width="9" height="1"/>
<rect x="23" y="364" width="10" height="1"/>
<rect x="514" y="364" width="10" height="1"/>
<rect x="269" y="364" width="9" height="1"/>
<rect x="23" y="374" width="5" height="1"/>
<rect x="519" y="374" width="5" height="1"/>
<rect x="269" y="374" width="9" height="1"/>
<rect x="23" y="384" width="5" height="1"/>
<rect x="519" y="384" width="5" height="1"/>
<rect x="269" y="384" width="9" height="1"/>
<rect x="23" y="394" width="5" height="1"/>
<rect x="519" y="394" width="5" height="1"/>
<rect x="269" y="394" width="9" height="1"/>
<rect x="23" y="404" width="5" height="1"/>
<rect x="519" y="404" width="5" height="1"/>
<rect x="269" y="404" width="9" height="1"/>
<rect x="73" y="24" width="1" height="1"/>
<rect x="73" y="34" width="1" height="1"/>
<rect x="73" y="44" width="1" height="1"/>
<rect x="73" y="54" width="1" height="1"/>
<rect x="73" y="64" width="1" height="1"/>
<rect x="73" y="74" width="1" height="1"/>
<rect x="73" y="84" width="1" height="1"/>
<rect x="73" y="94" width="1" height="1"/>
<rect x="73" y="104" width="1" height="1"/>
<rect x="73" y="114" width="1" height="1"/>
<rect x="73" y="124" width="1" height="1"/>
<rect x="73" y="134" width="1" height="1"/>
<rect x="73" y="144" width="1" height="1"/>
<rect x="73" y="154" width="1" height="1"/>
<rect x="73" y="164" width="1" height="1"/>
<rect x="73" y="174" width="1" height="1"/>
<rect x="73" y="184" width="1" height="1"/>
<rect x="73" y="194" width="1" height="1"/>
<rect x="73" y="204" width="1" height="1"/>
<rect x="73" y="214" width="1" height="1"/>
<rect x="73" y="224" width="1" height="1"/>
<rect x="73" y="234" width="1" height="1"/>
<rect x="73" y="244" width="1" height="1"/>
<rect x="73" y="254" width="1" height="1"/>
<rect x="73" y="264" width="1" height="1"/>
<rect x="73" y="274" width="1" height="1"/>
<rect x="73" y="284" width="1" height="1"/>
<rect x="73" y="294" width="1" height="1"/>
<rect x="73" y="304" width="1" height="1"/>
<rect x="73" y="314" width="1" height="1"/>
<rect x="73" y="324" width="1" height="1"/>
<rect x="73" y="334" width="1" height="1"/>
<rect x="73" y="344" width="1" height="1"/>
<rect x="73" y="354" width="1" height="1"/>
<rect x="73" y="364" width="1" height="1"/>
<rect x="73" y="374" width="1" height="1"/>
<rect x="73" y="384" width="1" height="1"/>
<rect x="73" y="394" width="1" height="1"/>
<rect x="73" y="404" width="1" height="1"/>
<rect x="123" y="24" width="1" height="1"/>
<rect x="123" y="34" width="1" height="1"/>
<rect x="123" y="44" width="1" height="1"/>
<rect x="123" y="54" width="1" height="1"/>
<rect x="123" y="64" width="1" height="1"/>
<rect x="123" y="74" width="1" height="1"/>
<rect x="123" y="84" width="1" height="1"/>
<rect x="123" y="94" width="1" height="1"/>
<rect x="123" y="104" width="1" height="1"/>
<rect x="123" y="114" width="1" height="1"/>
<rect x="123" y="124" width="1" height="1"/>
<rect x="123" y="134" width="1" height="1"/>
<rect x="123" y="144" width="1" height="1"/>
<rect x="123" y="154" width="1" height="1"/>
<rect x="123" y="164" width="1" height="1"/>
<rect x="123" y="174" width="1" height="1"/>
<rect x="123" y="184" width="1" height="1"/>
<rect x="123" y="194" width="1" height="1"/>
<rect x="123" y="204" width="1" height="1"/>
<rect x="123" y="214" width="1" height="1"/>
<rect x="123" y="224" width="1" height="1"/>
<rect x="123" y="234" width="1" height="1"/>
<rect x="123" y="244" width="1" height="1"/>
<rect x="123" y="254" width="1" height="1"/>
<rect x="123" y="264" width="1" height="1"/>
<rect x="123" y="274" width="1" height="1"/>
<rect x="123" y="284" width="1" height="1"/>
<rect x="123" y="294" width="1" height="1"/>
<rect x="123" y="304" width="1" height="1"/>
<rect x="123" y="314" width="1" height="1"/>
<rect x="123" y="324" width="1" height="1"/>
<rect x="123" y="334" width="1" height="1"/>
<rect x="123" y="344" width="1" height="1"/>
<rect x="123" y="354" width="1" height="1"/>
<rect x="123" y="364" width="1" height="1"/>
<rect x="123" y="374" width="1" height="1"/>
<rect x="123" y="384" width="1" height="1"/>
<rect x="123" y="394" width="1" height="1"/>
<rect x="123" y="404" width="1" height="1"/>
<rect x="173" y="24" width="1" height="1"/>
<rect x="173" y="34" width="1" height="1"/>
<rect x="173" y="44" width="1" height="1"/>
<rect x="173" y="54" width="1" height="1"/>
<rect x="173" y="64" width="1" height="1"/>
<rect x="173" y="74" width="1" height="1"/>
<rect x="173" y="84" width="1" height="1"/>
<rect x="173" y="94" width="1" height="1"/>
<rect x="173" y="104" width="1" height="1"/>
<rect x="173" y="114" width="1" height="1"/>
<rect x="173" y="124" width="1" height="1"/>
<rect x="173" y="134" width="1" height="1"/>
<rect x="173" y="144" width="1" height="1"/>
<rect x="173" y="154" width="1" height="1"/>
<rect x="173" y="164" width="1" height="1"/>
<rect x="173" y="174" width="1" height="1"/>
<rect x="173" y="184" width="1" height="1"/>
<rect x="173" y="194" width="1" height="1"/>
<rect x="173" y="204" width="1" height="1"/>
<rect x="173" y="214" width="1" height="1"/>
<rect x="173" y="224" width="1" height="1"/>
<rect x="173" y="234" width="1" height="1"/>
<rect x="173" y="244" width="1" height="1"/>
<rect x="173" y="254" width="1" height="1"/>
<rect x="173" y="264" width="1" height="1"/>
<rect x="173" y="274" width="1" height="1"/>
<rect x="173" y="284" width="1" height="1"/>
<rect x="173" y="294" width="1" height="1"/>
<rect x="173" y="304" width="1" height="1"/>
<rect x="173" y="314" width="1" height="1"/>
<rect x="173" y="324" width="1" height="1"/>
<rect x="173" y="334" width="1" height="1"/>
<rect x="173" y="344" width="1" height="1"/>
<rect x="173" y="354" width="1" height="1"/>
<rect x="173" y="364" width="1" height="1"/>
<rect x="173" y="374" width="1" height="1"/>
<rect x="173" y="384" width="1" height="1"/>
<rect x="173" y="394" width="1" height="1"/>
<rect x="173" y="404" width="1" height="1"/>
<rect x="223" y="24" width="1" height="1"/>
<rect x="223" y="34" width="1" height="1"/>
<rect x="223" y="44" width="1" height="1"/>
<rect x="223" y="54" width="1" height="1"/>
<rect x="223" y="64" width="1" height="1"/>
<rect x="223" y="74" width="1" height="1"/>
<rect x="223" y="84" width="1" height="1"/>
<rect x="223" y="94" width="1" height="1"/>
<rect x="223" y="104" width="1" height="1"/>
<rect x="223" y="114" width="1" height="1"/>
<rect x="223" y="124" width="1" height="1"/>
<rect x="223" y="134" width="1" height="1"/>
<rect x="223" y="144" width="1" height="1"/>
<rect x="223" y="154" width="1" height="1"/>
<rect x="223" y="164" width="1" height="1"/>
<rect x="223" y="174" width="1" height="1"/>
<rect x="223" y="184" width="1" height="1"/>
<rect x="223" y="194" width="1" height="1"/>
<rect x="223" y="204" width="1" height="1"/>
<rect x="223" y="214" width="1" height="1"/>
<rect x="223" y="224" width="1" height="1"/>
<rect x="223" y="234" width="1" height="1"/>
<rect x="223" y="244" width="1" height="1"/>
<rect x="223" y="254" width="1" height="1"/>
<rect x="223" y="264" width="1" height="1"/>
<rect x="223" y="274" width="1" height="1"/>
<rect x="223" y="284" width="1" height="1"/>
<rect x="223" y="294" width="1" height="1"/>
<rect x="223" y="304" width="1" height="1"/>
<rect x="223" y="314" width="1" height="1"/>
<rect x="223" y="324" width="1" height="1"/>
<rect x="223" y="334" width="1" height="1"/>
<rect x="223" y="344" width="1" height="1"/>
<rect x="223" y="354" width="1" height="1"/>
<rect x="223" y="364" width="1" height="1"/>
<rect x="223" y="374" width="1" height="1"/>
<rect x="223" y="384" width="1" height="1"/>
<rect x="223" y="394" width="1" height="1"/>
<rect x="223" y="404" width="1" height="1"/>
<rect x="323" y="24" width="1" height="1"/>
<rect x="323" y="34" width="1" height="1"/>
<rect x="323" y="44" width="1" height="1"/>
<rect x="323" y="54" width="1" height="1"/>
<rect x="323" y="64" width="1" height="1"/>
<rect x="323" y="74" width="1" height="1"/>
<rect x="323" y="84" width="1" height="1"/>
<rect x="323" y="94" width="1" height="1"/>
<rect x="323" y="104" width="1" height="1"/>
<rect x="323" y="114" width="1" height="1"/>
<rect x="323" y="124" width="1" height="1"/>
<rect x="323" y="134" width="1" height="1"/>
<rect x="323" y="144" width="1" height="1"/>
<rect x="323" y="154" width="1" height="1"/>
<rect x="323" y="164" width="1" height="1"/>
<rect x="323" y="174" width="1" height="1"/>
<rect x="323" y="184" width="1" height="1"/>
<rect x="323" y="194" width="1" height="1"/>
<rect x="323" y="204" width="1" height="1"/>
<rect x="323" y="214" width="1" height="1"/>
<rect x="323" y="224" width="1" height="1"/>
<rect x="323" y="234" width="1" height="1"/>
<rect x="323" y="244" width="1" height="1"/>
<rect x="323" y="254" width="1" height="1"/>
<rect x="323" y="264" width="1" height="1"/>
<rect x="323" y="274" width="1" height="1"/>
<rect x="323" y="284" width="1" height="1"/>
<rect x="323" y="294" width="1" height="1"/>
<rect x="323" y="304" width="1" height="1"/>
<rect x="323" y="314" width="1" height="1"/>
<rect x="323" y="324" width="1" height="1"/>
<rect x="323" y="334" width="1" height="1"/>
<rect x="323" y="344" width="1" height="1"/>
<rect x="323" y="354" width="1" height="1"/>
<rect x="323" y="364" width="1" height="1"/>
<rect x="323" y="374" width="1" height="1"/>
<rect x="323" y="384" width="1" height="1"/>
<rect x="323" y="394" width="1" height="1"/>
<rect x="323" y="404" width="1" height="1"/>
<rect x="373" y="24" width="1" height="1"/>
<rect x="373" y="34" width="1" height="1"/>
<rect x="373" y="44" width="1" height="1"/>
<rect x="373" y="54" width="1" height="1"/>
<rect x="373" y="64" width="1" height="1"/>
<rect x="373" y="74" width="1" height="1"/>
<rect x="373" y="84" width="1" height="1"/>
<rect x="373" y="94" width="1" height="1"/>
<rect x="373" y="104" width="1" height="1"/>
<rect x="373" y="114" width="1" height="1"/>
<rect x="373" y="124" width="1" height="1"/>
<rect x="373" y="134" width="1" height="1"/>
<rect x="373" y="144" width="1" height="1"/>
<rect x="373" y="154" width="1" height="1"/>
<rect x="373" y="164" width="1" height="1"/>
<rect x="373" y="174" width="1" height="1"/>
<rect x="373" y="184" width="1" height="1"/>
<rect x="373" y="194" width="1" height="1"/>
<rect x="373" y="204" width="1" height="1"/>
<rect x="373" y="214" width="1" height="1"/>
<rect x="373" y="224" width="1" height="1"/>
<rect x="373" y="234" width="1" height="1"/>
<rect x="373" y="244" width="1" height="1"/>
<rect x="373" y="254" width="1" height="1"/>
<rect x="373" y="264" width="1" height="1"/>
<rect x="373" y="274" width="1" height="1"/>
<rect x="373" y="284" width="1" height="1"/>
<rect x="373" y="294" width="1" height="1"/>
<rect x="373" y="304" width="1" height="1"/>
<rect x="373" y="314" width="1" height="1"/>
<rect x="373" y="324" width="1" height="1"/>
<rect x="373" y="334" width="1" height="1"/>
<rect x="373" y="344" width="1" height="1"/>
<rect x="373" y="354" width="1" height="1"/>
<rect x="373" y="364" width="1" height="1"/>
<rect x="373" y="374" width="1" height="1"/>
<rect x="373" y="384" width="1" height="1"/>
<rect x="373" y="394" width="1" height="1"/>
<rect x="373" y="404" width="1" height="1"/>
<rect x="423" y="24" width="1" height="1"/>
<rect x="423" y="34" width="1" height="1"/>
<rect x="423" y="44" width="1" height="1"/>
<rect x="423" y="54" width="1" height="1"/>
<rect x="423" y="64" width="1" height="1"/>
<rect x="423" y="74" width="1" height="1"/>
<rect x="423" y="84" width="1" height="1"/>
<rect x="423" y="94" width="1" height="1"/>
<rect x="423" y="104" width="1" height="1"/>
<rect x="423" y="114" width="1" height="1"/>
<rect x="423" y="124" width="1" height="1"/>
<rect x="423" y="134" width="1" height="1"/>
<rect x="423" y="144" width="1" height="1"/>
<rect x="423" y="154" width="1" height="1"/>
<rect x="423" y="164" width="1" height="1"/>
<rect x="423" y="174" width="1" height="1"/>
<rect x="423" y="184" width="1" height="1"/>
<rect x="423" y="194" width="1" height="1"/>
<rect x="423" y="204" width="1" height="1"/>
<rect x="423" y="214" width="1" height="1"/>
<rect x="423" y="224" width="1" height="1"/>
<rect x="423" y="234" width="1" height="1"/>
<rect x="423" y="244" width="1" height="1"/>
<rect x="423" y="254" width="1" height="1"/>
<rect x="423" y="264" width="1" height="1"/>
<rect x="423" y="274" width="1" height="1"/>
<rect x="423" y="284" width="1" height="1"/>
<rect x="423" y="294" width="1" height="1"/>
<rect x="423" y="304" width="1" height="1"/>
<rect x="423" y="314" width="1" height="1"/>
<rect x="423" y="324" width="1" height="1"/>
<rect x="423" y="334" width="1" height="1"/>
<rect x="423" y="344" width="1" height="1"/>
<rect x="423" y="354" width="1" height="1"/>
<rect x="423" y="364" width="1" height="1"/>
<rect x="423" y="374" width="1" height="1"/>
<rect x="423" y="384" width="1" height="1"/>
<rect x="423" y="394" width="1" height="1"/>
<rect x="423" y="404" width="1" height="1"/>
<rect x="473" y="24" width="1" height="1"/>
<rect x="473" y="34" width="1" height="1"/>
<rect x="473" y="44" width="1" height="1"/>
<rect x="473" y="54" width="1" height="1"/>
<rect x="473" y="64" width="1" height="1"/>
<rect x="473" y="74" width="1" height="1"/>
<rect x="473" y="84" width="1" height="1"/>
<rect x="473" y="94" width="1" height="1"/>
<rect x="473" y="104" width="1" height="1"/>
<rect x="473" y="114" width="1" height="1"/>
<rect x="473" y="124" width="1" height="1"/>
<rect x="473" y="134" width="1" height="1"/>
<rect x="473" y="144" width="1" height="1"/>
<rect x="473" y="154" width="1" height="1"/>
<rect x="473" y="164" width="1" height="1"/>
<rect x="473" y="174" width="1" height="1"/>
<rect x="473" y="184" width="1" height="1"/>
<rect x="473" y="194" width="1" height="1"/>
<rect x="473" y="204" width="1" height="1"/>
<rect x="473" y="214" width="1" height="1"/>
<rect x="473" y="224" width="1" height="1"/>
<rect x="473" y="234" width="1" height="1"/>
<rect x="473" y="244" width="1" height="1"/>
<rect x="473" y="254" width="1" height="1"/>
<rect x="473" y="264" width="1" height="1"/>
<rect x="473" y="274" width="1" height="1"/>
<rect x="473" y="284" width="1" height="1"/>
<rect x="473" y="294" width="1" height="1"/>
<rect x="473" y="304" width="1" height="1"/>
<rect x="473" y="314" width="1" height="1"/>
<rect x="473" y="324" width="1" height="1"/>
<rect x="473" y="334" width="1" height="1"/>
<rect x="473" y="344" width="1" height="1"/>
<rect x="473" y="354" width="1" height="1"/>
<rect x="473" y="364" width="1" height="1"/>
<rect x="473" y="374" width="1" height="1"/>
<rect x="473" y="384" width="1" height="1"/>
<rect x="473" y="394" width="1" height="1"/>
<rect x="473" y="404" width="1" height="1"/>
<rect x="33" y="64" width="1" height="1"/>
<rect x="43" y="64" width="1" height="1"/>
<rect x="53" y="64" width="1" height="1"/>
<rect x="63" y="64" width="1" height="1"/>
<rect x="73" y="64" width="1" height="1"/>
<rect x="83" y="64" width="1" height="1"/>
<rect x="93" y="64" width="1" height="1"/>
<rect x="103" y="64" width="1" height="1"/>
<rect x="113" y="64" width="1" height="1"/>
<rect x="123" y="64" width="1" height="1"/>
<rect x="133" y="64" width="1" height="1"/>
<rect x="143" y="64" width="1" height="1"/>
<rect x="153" y="64" width="1" height="1"/>
<rect x="163" y="64" width="1" height="1"/>
<rect x="173" y="64" width="1" height="1"/>
<rect x="183" y="64" width="1" height="1"/>
<rect x="193" y="64" width="1" height="1"/>
<rect x="203" y="64" width="1" height="1"/>
<rect x="213" y="64" width="1" height="1"/>
<rect x="223" y="64" width="1" height="1"/>
<rect x="233" y="64" width="1" height="1"/>
<rect x="243" y="64" width="1" height="1"/>
<rect x="253" y="64" width="1" height="1"/>
<rect x="263" y="64" width="1" height="1"/>
<rect x="273" y="64" width="1" height="1"/>
<rect x="283" y="64" width="1" height="1"/>
<rect x="293" y="64" width="1" height="1"/>
<rect x="303" y="64" width="1" height="1"/>
<rect x="313" y="64" width="1" height="1"/>
<rect x="323" y="64" width="1" height="1"/>
<rect x="333" y="64" width="1" height="1"/>
<rect x="343" y="64" width="1" height="1"/>
<rect x="353" y="64" width="1" height="1"/>
<rect x="363" y="64" width="1" height="1"/>
<rect x="373" y="64" width="1" height="1"/>
<rect x="383" y="64" width="1" height="1"/>
<rect x="393" y="64" width="1" height="1"/>
<rect x="403" y="64" width="1" height="1"/>
<rect x="413" y="64" width="1" height="1"/>
<rect x="423" y="64" width="1" height="1"/>
<rect x="433" y="64" width="1" height="1"/>
<rect x="443" y="64" width="1" height="1"/>
<rect x="453" y="64" width="1" height="1"/>
<rect x="463" y="64" width="1" height="1"/>
<rect x="473" y="64" width="1" height="1"/>
<rect x="483" y="64" width="1" height="1"/>
<rect x="493" y="64" width="1" height="1"/>
<rect x="503" y="64" width="1" height="1"/>
<rect x="513" y="64" width="1" height="1"/>
<rect x="33" y="114" width="1" height="1"/>
<rect x="43" y="114" width="1" height="1"/>
<rect x="53" y="114" width="1" height="1"/>
<rect x="63" y="114" width="1" height="1"/>
<rect x="73" y="114" width="1" height="1"/>
<rect x="83" y="114" width="1" height="1"/>
<rect x="93" y="114" width="1" height="1"/>
<rect x="103" y="114" width="1" height="1"/>
<rect x="113" y="114" width="1" height="1"/>
<rect x="123" y="114" width="1" height="1"/>
<rect x="133" y="114" width="1" height="1"/>
<rect x="143" y="114" width="1" height="1"/>
<rect x="153" y="114" width="1" height="1"/>
<rect x="163" y="114" width="1" height="1"/>
<rect x="173" y="114" width="1" height="1"/>
<rect x="183" y="114" width="1" height="1"/>
<rect x="193" y="114" width="1" height="1"/>
<rect x="203" y="114" width="1" height="1"/>
<rect x="213" y="114" width="1" height="1"/>
<rect x="223" y="114" width="1" height="1"/>
<rect x="233" y="114" width="1" height="1"/>
<rect x="243" y="114" width="1" height="1"/>
<rect x="253" y="114" width="1" height="1"/>
<rect x="263" y="114" width="1" height="1"/>
<rect x="273" y="114" width="1" height="1"/>
<rect x="283" y="114" width="1" height="1"/>
<rect x="293" y="114" width="1" height="1"/>
<rect x="303" y="114" width="1" height="1"/>
<rect x="313" y="114" width="1" height="1"/>
<rect x="323" y="114" width="1" height="1"/>
<rect x="333" y="114" width="1" height="1"/>
<rect x="343" y="114" width="1" height="1"/>
<rect x="353" y="114" width="1" height="1"/>
<rect x="363" y="114" width="1" height="1"/>
<rect x="373" y="114" width="1" height="1"/>
<rect x="383" y="114" width="1" height="1"/>
<rect x="393" y="114" width="1" height="1"/>
<rect x="403" y="114" width="1" height="1"/>
<rect x="413" y="114" width="1" height="1"/>
<rect x="423" y="114" width="1" height="1"/>
<rect x="433" y="114" width="1" height="1"/>
<rect x="443" y="114" width="1" height="1"/>
<rect x="453" y="114" width="1" height="1"/>
<rect x="463" y="114" width="1" height="1"/>
<rect x="473" y="114" width="1" height="1"/>
<rect x="483" y="114" width="1" height="1"/>
<rect x="493" y="114" width="1" height="1"/>
<rect x="503" y="114" width="1" height="1"/>
<rect x="513" y="114" width="1" height="1"/>
<rect x="33" y="164" width="1" height="1"/>
<rect x="43" y="164" width="1" height="1"/>
<rect x="53" y="164" width="1" height="1"/>
<rect x="63" y="164" width="1" height="1"/>
<rect x="73" y="164" width="1" height="1"/>
<rect x="83" y="164" width="1" height="1"/>
<rect x="93" y="164" width="1" height="1"/>
<rect x="103" y="164" width="1" height="1"/>
<rect x="113" y="164" width="1" height="1"/>
<rect x="123" y="164" width="1" height="1"/>
<rect x="133" y="164" width="1" height="1"/>
<rect x="143" y="164" width="1" height="1"/>
<rect x="153" y="164" width="1" height="1"/>
<rect x="163" y="164" width="1" height="1"/>
<rect x="173" y="164" width="1" height="1"/>
<rect x="183" y="164" width="1" height="1"/>
<rect x="193" y="164" width="1" height="1"/>
<rect x="203" y="164" width="1" height="1"/>
<rect x="213" y="164" width="1" height="1"/>
<rect x="223" y="164" width="1" height="1"/>
<rect x="233" y="164" width="1" height="1"/>
<rect x="243" y="164" width="1" height="1"/>
<rect x="253" y="164" width="1" height="1"/>
<rect x="263" y="164" width="1" height="1"/>
<rect x="273" y="164" width="1" height="1"/>
<rect x="283" y="164" width="1" height="1"/>
<rect x="293" y="164" width="1" height="1"/>
<rect x="303" y="164" width="1" height="1"/>
<rect x="313" y="164" width="1" height="1"/>
<rect x="323" y="164" width="1" height="1"/>
<rect x="333" y="164" width="1" height="1"/>
<rect x="343" y="164" width="1" height="1"/>
<rect x="353" y="164" width="1" height="1"/>
<rect x="363" y="164" width="1" height="1"/>
<rect x="373" y="164" width="1" height="1"/>
<rect x="383" y="164" width="1" height="1"/>
<rect x="393" y="164" width="1" height="1"/>
<rect x="403" y="164" width="1" height="1"/>
<rect x="413" y="164" width="1" height="1"/>
<rect x="423" y="164" width="1" height="1"/>
<rect x="433" y="164" width="1" height="1"/>
<rect x="443" y="164" width="1" height="1"/>
<rect x="453" y="164" width="1" height="1"/>
<rect x="463" y="164" width="1" height="1"/>
<rect x="473" y="164" width="1" height="1"/>
<rect x="483" y="164" width="1" height="1"/>
<rect x="493" y="164" width="1" height="1"/>
<rect x="503" y="164" width="1" height="1"/>
<rect x="513" y="164" width="1" height="1"/>
<rect x="33" y="264" width="1" height="1"/>
<rect x="43" y="264" width="1" height="1"/>
<rect x="53" y="264" width="1" height="1"/>
<rect x="63" y="264" width="1" height="1"/>
<rect x="73" y="264" width="1" height="1"/>
<rect x="83" y="264" width="1" height="1"/>
<rect x="93" y="264" width="1" height="1"/>
<rect x="103" y="264" width="1" height="1"/>
<rect x="113" y="264" width="1" height="1"/>
<rect x="123" y="264" width="1" height="1"/>
<rect x="133" y="264" width="1" height="1"/>
<rect x="143" y="264" width="1" height="1"/>
<rect x="153" y="264" width="1" height="1"/>
<rect x="163" y="264" width="1" height="1"/>
<rect x="173" y="264" width="1" height="1"/>
<rect x="183" y="264" width="1" height="1"/>
<rect x="193" y="264" width="1" height="1"/>
<rect x="203" y="264" width="1" height="1"/>
<rect x="213" y="264" width="1" height="1"/>
<rect x="223" y="264" width="1" height="1"/>
<rect x="233" y="264" width="1" height="1"/>
<rect x="243" y="264" width="1" height="1"/>
<rect x="253" y="264" width="1" height="1"/>
<rect x="263" y="264" width="1" height="1"/>
<rect x="273" y="264" width="1" height="1"/>
<rect x="283" y="264" width="1" height="1"/>
<rect x="293" y="264" width="1" height="1"/>
<rect x="303" y="264" width="1" height="1"/>
<rect x="313" y="264" width="1" height="1"/>
<rect x="323" y="264" width="1" height="1"/>
<rect x="333" y="264" width="1" height="1"/>
<rect x="343" y="264" width="1" height="1"/>
<rect x="353" y="264" width="1" height="1"/>
<rect x="363" y="264" width="1" height="1"/>
<rect x="373" y="264" width="1" height="1"/>
<rect x="383" y="264" width="1" height="1"/>
<rect x="393" y="264" width="1" height="1"/>
<rect x="403" y="264" width="1" height="1"/>
<rect x="413" y="264" width="1" height="1"/>
<rect x="423" y="264" width="1" height="1"/>
<rect x="433" y="264" width="1" height="1"/>
<rect x="443" y="264" width="1" height="1"/>
<rect x="453" y="264" width="1" height="1"/>
<rect x="463" y="264" width="1" height="1"/>
<rect x="473" y="264" width="1" height="1"/>
<rect x="483" y="264" width="1" height="1"/>
<rect x="493" y="264" width="1" height="1"/>
<rect x="503" y="264" width="1" height="1"/>
<rect x="513" y="264" width="1" height="1"/>
<rect x="33" y="314" width="1" height="1"/>
<rect x="43" y="314" width="1" height="1"/>
<rect x="53" y="314" width="1" height="1"/>
<rect x="63" y="314" width="1" height="1"/>
<rect x="73" y="314" width="1" height="1"/>
<rect x="83" y="314" width="1" height="1"/>
<rect x="93" y="314" width="1" height="1"/>
<rect x="103" y="314" width="1" height="1"/>
<rect x="113" y="314" width="1" height="1"/>
<rect x="123" y="314" width="1" height="1"/>
<rect x="133" y="314" width="1" height="1"/>
<rect x="143" y="314" width="1" height="1"/>
<rect x="153" y="314" width="1" height="1"/>
<rect x="163" y="314" width="1" height="1"/>
<rect x="173" y="314" width="1" height="1"/>
<rect x="183" y="314" width="1" height="1"/>
<rect x="193" y="314" width="1" height="1"/>
<rect x="203" y="314" width="1" height="1"/>
<rect x="213" y="314" width="1" height="1"/>
<rect x="223" y="314" width="1" height="1"/>
<rect x="233" y="314" width="1" height="1"/>
<rect x="243" y="314" width="1" height="1"/>
<rect x="253" y="314" width="1" height="1"/>
<rect x="263" y="314" width="1" height="1"/>
<rect x="273" y="314" width="1" height="1"/>
<rect x="283" y="314" width="1" height="1"/>
<rect x="293" y="314" width="1" height="1"/>
<rect x="303" y="314" width="1" height="1"/>
<rect x="313" y="314" width="1" height="1"/>
<rect x="323" y="314" width="1" height="1"/>
<rect x="333" y="314" width="1" height="1"/>
<rect x="343" y="314" width="1" height="1"/>
<rect x="353" y="314" width="1" height="1"/>
<rect x="363" y="314" width="1" height="1"/>
<rect x="373" y="314" width="1" height="1"/>
<rect x="383" y="314" width="1" height="1"/>
<rect x="393" y="314" width="1" height="1"/>
<rect x="403" y="314" width="1" height="1"/>
<rect x="413" y="314" width="1" height="1"/>
<rect x="423" y="314" width="1" height="1"/>
<rect x="433" y="314" width="1" height="1"/>
<rect x="443" y="314" width="1" height="1"/>
<rect x="453" y="314" width="1" height="1"/>
<rect x="463" y="314" width="1" height="1"/>
<rect x="473" y="314" width="1" height="1"/>
<rect x="483" y="314" width="1" height="1"/>
<rect x="493" y="314" width="1" height="1"/>
<rect x="503" y="314" width="1" height="1"/>
<rect x="513" y="314" width="1" height="1"/>
<rect x="33" y="364" width="1" height="1"/>
<rect x="43" y="364" width="1" height="1"/>
<rect x="53" y="364" width="1" height="1"/>
<rect x="63" y="364" width="1" height="1"/>
<rect x="73" y="364" width="1" height="1"/>
<rect x="83" y="364" width="1" height="1"/>
<rect x="93" y="364" width="1" height="1"/>
<rect x="103" y="364" width="1" height="1"/>
<rect x="113" y="364" width="1" height="1"/>
<rect x="123" y="364" width="1" height="1"/>
<rect x="133" y="364" width="1" height="1"/>
<rect x="143" y="364" width="1" height="1"/>
<rect x="153" y="364" width="1" height="1"/>
<rect x="163" y="364" width="1" height="1"/>
<rect x="173" y="364" width="1" height="1"/>
<rect x="183" y="364" width="1" height="1"/>
<rect x="193" y="364" width="1" height="1"/>
<rect x="203" y="364" width="1" height="1"/>
<rect x="213" y="364" width="1" height="1"/>
<rect x="223" y="364" width="1" height="1"/>
<rect x="233" y="364" width="1" height="1"/>
<rect x="243" y="364" width="1" height="1"/>
<rect x="253" y="364" width="1" height="1"/>
<rect x="263" y="364" width="1" height="1"/>
<rect x="273" y="364" width="1" height="1"/>
<rect x="283" y="364" width="1" height="1"/>
<rect x="293" y="364" width="1" height="1"/>
<rect x="303" y="364" width="1" height="1"/>
<rect x="313" y="364" width="1" height="1"/>
<rect x="323" y="364" width="1" height="1"/>
<rect x="333" y="364" width="1" height="1"/>
<rect x="343" y="364" width="1" height="1"/>
<rect x="353" y="364" width="1" height="1"/>
<rect x="363" y="364" width="1" height="1"/>
<rect x="373" y="364" width="1" height="1"/>
<rect x="383" y="364" width="1" height="1"/>
<rect x="393" y="364" width="1" height="1"/>
<rect x="403" y="364" width="1" height="1"/>
<rect x="413" y="364" width="1" height="1"/>
<rect x="423" y="364" width="1" height="1"/>
<rect x="433" y="364" width="1" height="1"/>
<rect x="443" y="364" width="1" height="1"/>
<rect x="453" y="364" width="1" height="1"/>
<rect x="463" y="364" width="1" height="1"/>
<rect x="473" y="364" width="1" height="1"/>
<rect x="483" y="364" width="1" height="1"/>
<rect x="493" y="364" width="1" height="1"/>
<rect x="503" y="364" width="1" height="1"/>
<rect x="513" y="364" width="1" height="1"/>
</g>
<use href="#tr" opacity="0.5"/>
<rect x="514" y="102" width="8" height="2" fill="#000"/>
<polygon points="280,14 291.5,14 285.75,20.5" fill="#f87830" shape-rendering="auto"/>
<rect x="2" y="209" width="21" height="14" fill="#00ff00"/>
<g fill="#000"><rect x="11" y="213" width="1" height="9"/><rect x="10" y="214" width="1" height="2"/><rect x="9" y="216" width="1" height="2"/><rect x="8" y="218" width="1" height="1"/><rect x="8" y="219" width="5" height="1"/><rect x="16" y="216" width="7" height="1"/><rect x="19" y="214" width="1" height="5"/><rect x="20" y="215" width="2" height="3"/><rect x="22" y="216" width="1" height="1"/></g>
</svg>
</body></html>
